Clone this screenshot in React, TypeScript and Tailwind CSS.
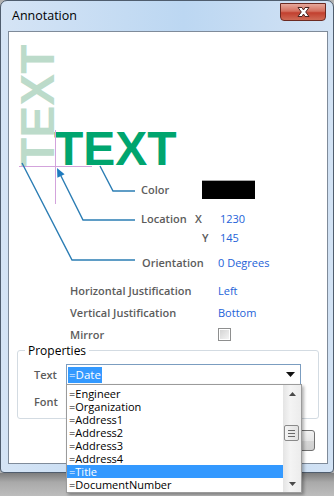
export default function App() {
  const items = [
    '=Engineer',
    '=Organization',
    '=Address1',
    '=Address2',
    '=Address3',
    '=Address4',
    '=Title',
    '=DocumentNumber',
  ];
  const label = 'font-semibold text-[#5c5c5c]';
  const value = 'text-[#2462d8]';

  return (
    <div className="w-[334px] h-[496px] overflow-hidden bg-[#b2b2b2] font-['Open_Sans',sans-serif] text-[11px] leading-none">
      {/* window frame */}
      <div className="relative h-[473px] w-[334px] rounded-t-[7px] rounded-b-[4px] border border-[#4f5d6e] bg-[linear-gradient(90deg,#d5e4f5,#bcd7f2_55%,#d2e2f4)] pt-[30px] pr-[5px] pb-[8px] pl-[7px]">
        <span className="absolute left-[11px] top-[7px] text-[12.5px] leading-[16px] text-black">Annotation</span>

        {/* close button */}
        <div className="absolute right-[7px] top-[2px] flex h-[18px] w-[46px] items-center justify-center rounded-b-[4px] border border-[#6b2a22] bg-[linear-gradient(180deg,#e6a89c,#d4705f_45%,#c2402f_55%,#cf6a55)]">
          <svg width="15" height="12" viewBox="0 0 15 12">
            <path d="M2 1.5 L6 1.5 L7.5 4 L9 1.5 L13 1.5 L9.7 6 L13 10.5 L9 10.5 L7.5 8 L6 10.5 L2 10.5 L5.3 6 Z" fill="#fff" stroke="#4b2420" strokeWidth="1" />
          </svg>
        </div>

        {/* client area */}
        <div className="relative h-[433px] w-[320px] border border-[#7f8b9a] bg-white">
          {/* button partly hidden behind the list */}
          <div className="absolute left-[231px] top-[398px] h-[21px] w-[75px] rounded-[3px] border border-[#707070] bg-[linear-gradient(180deg,#f2f2f2,#e6e6e6_50%,#d6d6d6_51%,#cfcfcf)]" />

          {/* preview text */}
          <span className="absolute left-[5px] top-[135px] origin-top-left -rotate-90 font-['Liberation_Sans',Arial,sans-serif] text-[48px] font-bold leading-[48px] text-[#bcdbca]">
            TEXT
          </span>
          <span className="absolute left-[45px] top-[93px] font-['Liberation_Sans',Arial,sans-serif] text-[48px] font-bold leading-[48px] text-[#00a56e]">
            TEXT
          </span>

          {/* leader lines */}
          <svg className="pointer-events-none absolute left-0 top-0 z-10" width="318" height="260" viewBox="9 32 318 260">
            <line x1="19" y1="166.5" x2="92" y2="166.5" stroke="#d3a3dc" strokeWidth="1" />
            <line x1="55.5" y1="130" x2="55.5" y2="204" stroke="#d3a3dc" strokeWidth="1" />
            <polyline points="100,166 113,191 135,191" fill="none" stroke="#2b7db4" strokeWidth="1.4" />
            <polyline points="60,174 83,220 135,220" fill="none" stroke="#2b7db4" strokeWidth="1.4" />
            <polygon points="57,168 64.6,174.2 57.4,177.8" fill="#1f7bbf" />
            <polyline points="22,163 72,260 135,260" fill="none" stroke="#2b7db4" strokeWidth="1.4" />
          </svg>

          <div className="pt-[148px]">
            <div className="flex h-[19px] items-center">
              <span className={`ml-[132px] w-[61px] ${label}`}>Color</span>
              <span className="h-[19px] w-[53px] border-t border-[#a8a8a8] bg-black" />
            </div>

            <div className="mt-[10px] flex h-[18px] items-center">
              <span className={`ml-[132px] w-[54px] ${label}`}>Location</span>
              <span className={`w-[25px] ${label}`}>X</span>
              <span className={value}>1230</span>
            </div>

            <div className="mt-[1px] flex h-[18px] items-center">
              <span className={`ml-[193px] w-[18px] ${label}`}>Y</span>
              <span className={value}>145</span>
            </div>

            <div className="mt-[7px] flex h-[18px] items-center">
              <span className={`ml-[133px] w-[76px] ${label}`}>Orientation</span>
              <span className={value}>0 Degrees</span>
            </div>

            <div className="mt-[10px] flex h-[18px] items-center">
              <span className={`ml-[61px] w-[148px] ${label}`}>Horizontal Justification</span>
              <span className={value}>Left</span>
            </div>

            <div className="mt-[4px] flex h-[18px] items-center">
              <span className={`ml-[61px] w-[148px] ${label}`}>Vertical Justification</span>
              <span className={value}>Bottom</span>
            </div>

            <div className="mt-[4px] flex h-[18px] items-center">
              <span className={`ml-[61px] w-[148px] ${label}`}>Mirror</span>
              <span className="h-[13px] w-[13px] border border-[#8e8f8f] bg-white p-[1px]">
                <span className="block h-full w-full bg-[linear-gradient(135deg,#d4d4d4,#f4f4f4)]" />
              </span>
            </div>

            {/* Properties group */}
            <div className="relative ml-[8px] mt-[7px] h-[69px] w-[302px] rounded-[3px] border border-[#d3dbe2] pl-[16px] pt-[13px]">
              <span className="absolute left-[7px] top-[-8px] bg-white px-[3px] text-[12px] leading-[15px] text-black">Properties</span>

              <div className="flex items-center">
                <span className={`w-[32px] ${label}`}>Text</span>
                <div className="relative flex h-[21px] w-[235px] items-center border border-[#7b9dc0] bg-white pl-[1px]">
                  <span className="h-[16px] bg-[#3399ff] px-[1px] text-[11.5px] leading-[16px] text-white">=Date</span>
                  <svg className="absolute right-[5px] top-[7px]" width="9" height="5" viewBox="0 0 9 5">
                    <path d="M0 0 H9 L4.5 5 Z" fill="#111" />
                  </svg>

                  {/* open list */}
                  <div className="absolute left-[-1px] top-[19px] z-20 flex h-[109px] w-[236px] border border-[#9b9b9b] bg-white shadow-[2px_2px_3px_rgba(0,0,0,0.3)]">
                    <div className="flex-1 pt-[2px]">
                      {items.map((it) => (
                        <div
                          key={it}
                          className={`h-[13px] pl-[2px] text-[11px] leading-[13px] ${it === '=Title' ? 'bg-[#3399ff] text-white' : 'text-black'}`}
                        >
                          {it}
                        </div>
                      ))}
                    </div>
                    <div className="flex w-[18px] flex-col bg-[linear-gradient(90deg,#e4e4e4,#f4f4f4_40%,#ececec)]">
                      <div className="flex h-[17px] items-center justify-center">
                        <svg width="7" height="4" viewBox="0 0 7 4">
                          <path d="M0 4 L3.5 0 L7 4 Z" fill="#4a4a4a" />
                        </svg>
                      </div>
                      <div className="ml-[1px] mt-[23px] flex h-[16px] w-[15px] flex-col items-center justify-center gap-[2px] rounded-[2px] border border-[#8a8a8a] bg-[linear-gradient(90deg,#f4f4f4,#e2e2e2)]">
                        <span className="h-px w-[7px] bg-[#6a6a6a]" />
                        <span className="h-px w-[7px] bg-[#6a6a6a]" />
                        <span className="h-px w-[7px] bg-[#6a6a6a]" />
                      </div>
                      <div className="flex-1" />
                      <div className="flex h-[17px] items-center justify-center">
                        <svg width="7" height="4" viewBox="0 0 7 4">
                          <path d="M0 0 H7 L3.5 4 Z" fill="#4a4a4a" />
                        </svg>
                      </div>
                    </div>
                  </div>
                </div>
              </div>

              <div className="mt-[6px] flex h-[20px] items-center">
                <span className={`w-[32px] ${label}`}>Font</span>
              </div>
            </div>
          </div>
        </div>
      </div>
      <div className="h-[23px] w-[334px] bg-[linear-gradient(180deg,#7d7d7d,#a9a9a9_40%,#bdbdbd)]" />
    </div>
  );
}
